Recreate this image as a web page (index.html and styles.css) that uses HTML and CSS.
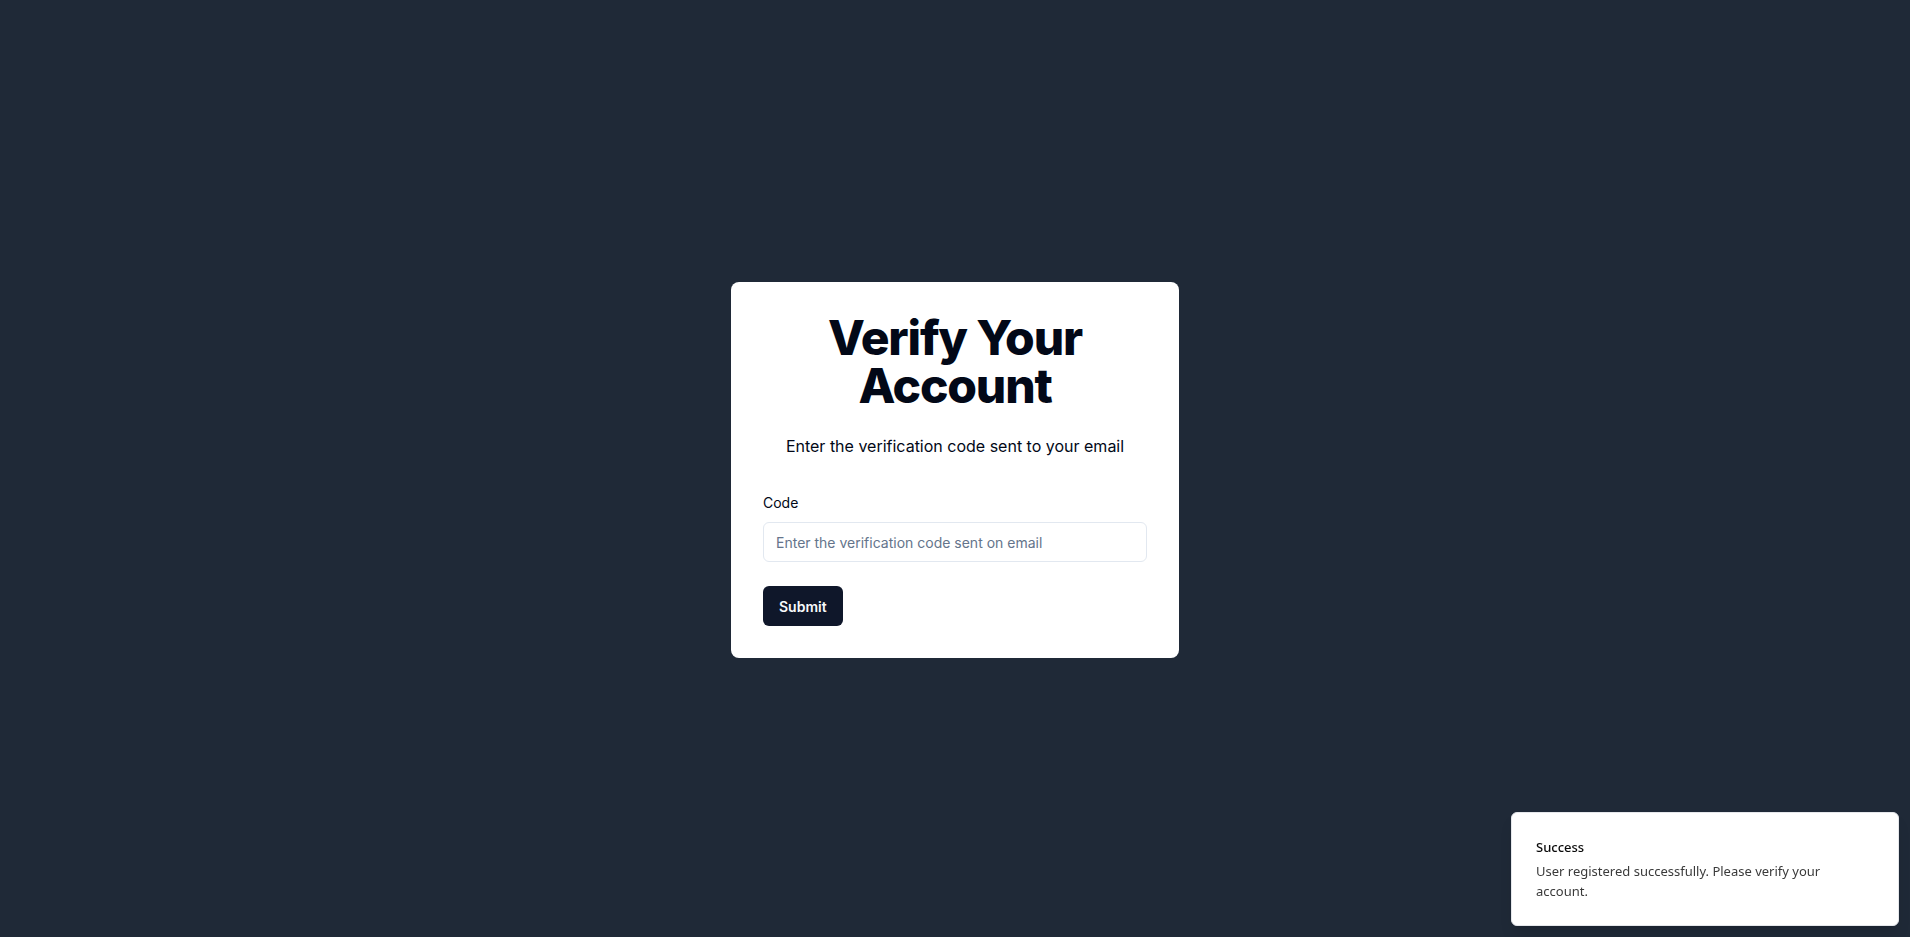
FILE: index.html
```html
<!DOCTYPE html>
<html lang="en">
<head>
<meta charset="utf-8">
<title>Verify Your Account</title>
<link rel="stylesheet" href="styles.css">
</head>
<body>
<main class="screen">
  <section class="card">
    <h1 class="title">Verify Your Account</h1>
    <p class="subtitle">Enter the verification code sent to your email</p>
    <form class="form">
      <label class="label" for="code">Code</label>
      <input class="input" id="code" type="text" placeholder="Enter the verification code sent on email">
      <button class="button" type="button">Submit</button>
    </form>
  </section>
</main>
<div class="toast">
  <div class="toast-title">Success</div>
  <div class="toast-desc">User registered successfully. Please verify your account.</div>
</div>
</body>
</html>
```

FILE: styles.css
```css
* { box-sizing: border-box; }
html, body { margin: 0; padding: 0; }
body {
  background: #1f2937;
  font-family: Inter, "Liberation Sans", sans-serif;
  color: #020817;
}
.screen {
  min-height: 100vh;
  padding-top: 3px;
  display: flex;
  align-items: center;
  justify-content: center;
}
.card {
  width: 448px;
  background: #ffffff;
  border-radius: 8px;
  padding: 32px;
}
.title {
  margin: 0;
  font-size: 48px;
  line-height: 48px;
  font-weight: 800;
  letter-spacing: -0.025em;
  text-align: center;
  color: #020817;
}
.subtitle {
  margin: 24px 0 0;
  font-size: 16px;
  line-height: 24px;
  text-align: center;
  color: #020817;
}
.form {
  margin-top: 35px;
  display: flex;
  flex-direction: column;
  align-items: flex-start;
}
.label {
  font-size: 14px;
  line-height: 20px;
  font-weight: 400;
  color: #020817;
}
.input {
  margin-top: 9px;
  width: 100%;
  height: 40px;
  border: 1px solid #e2e8f0;
  border-radius: 6px;
  padding: 0 12px;
  font-family: Inter, "Liberation Sans", sans-serif;
  font-size: 14px;
  color: #020817;
  background: #ffffff;
  outline: none;
}
.input::placeholder { color: #64748b; }
.button {
  margin-top: 24px;
  height: 40px;
  padding: 0 16px;
  border: none;
  border-radius: 6px;
  background: #0f172a;
  color: #f8fafc;
  font-family: Inter, "Liberation Sans", sans-serif;
  font-size: 14px;
  font-weight: 600;
}
.toast {
  position: fixed;
  right: 11px;
  bottom: 11px;
  width: 388px;
  background: #ffffff;
  border: 1px solid #e5e7eb;
  border-radius: 6px;
  padding: 24px 32px 24px 24px;
  box-shadow: 0 10px 15px -3px rgba(0,0,0,0.1), 0 4px 6px -4px rgba(0,0,0,0.1);
  font-family: "Noto Sans", "Open Sans", sans-serif;
  display: flex;
  flex-direction: column;
  gap: 4px;
}
.toast-title {
  font-size: 13px;
  line-height: 20px;
  font-weight: 500;
  color: #0a0a0a;
}
.toast-desc {
  font-size: 13px;
  line-height: 20px;
  color: #3a3a3a;
}
```
